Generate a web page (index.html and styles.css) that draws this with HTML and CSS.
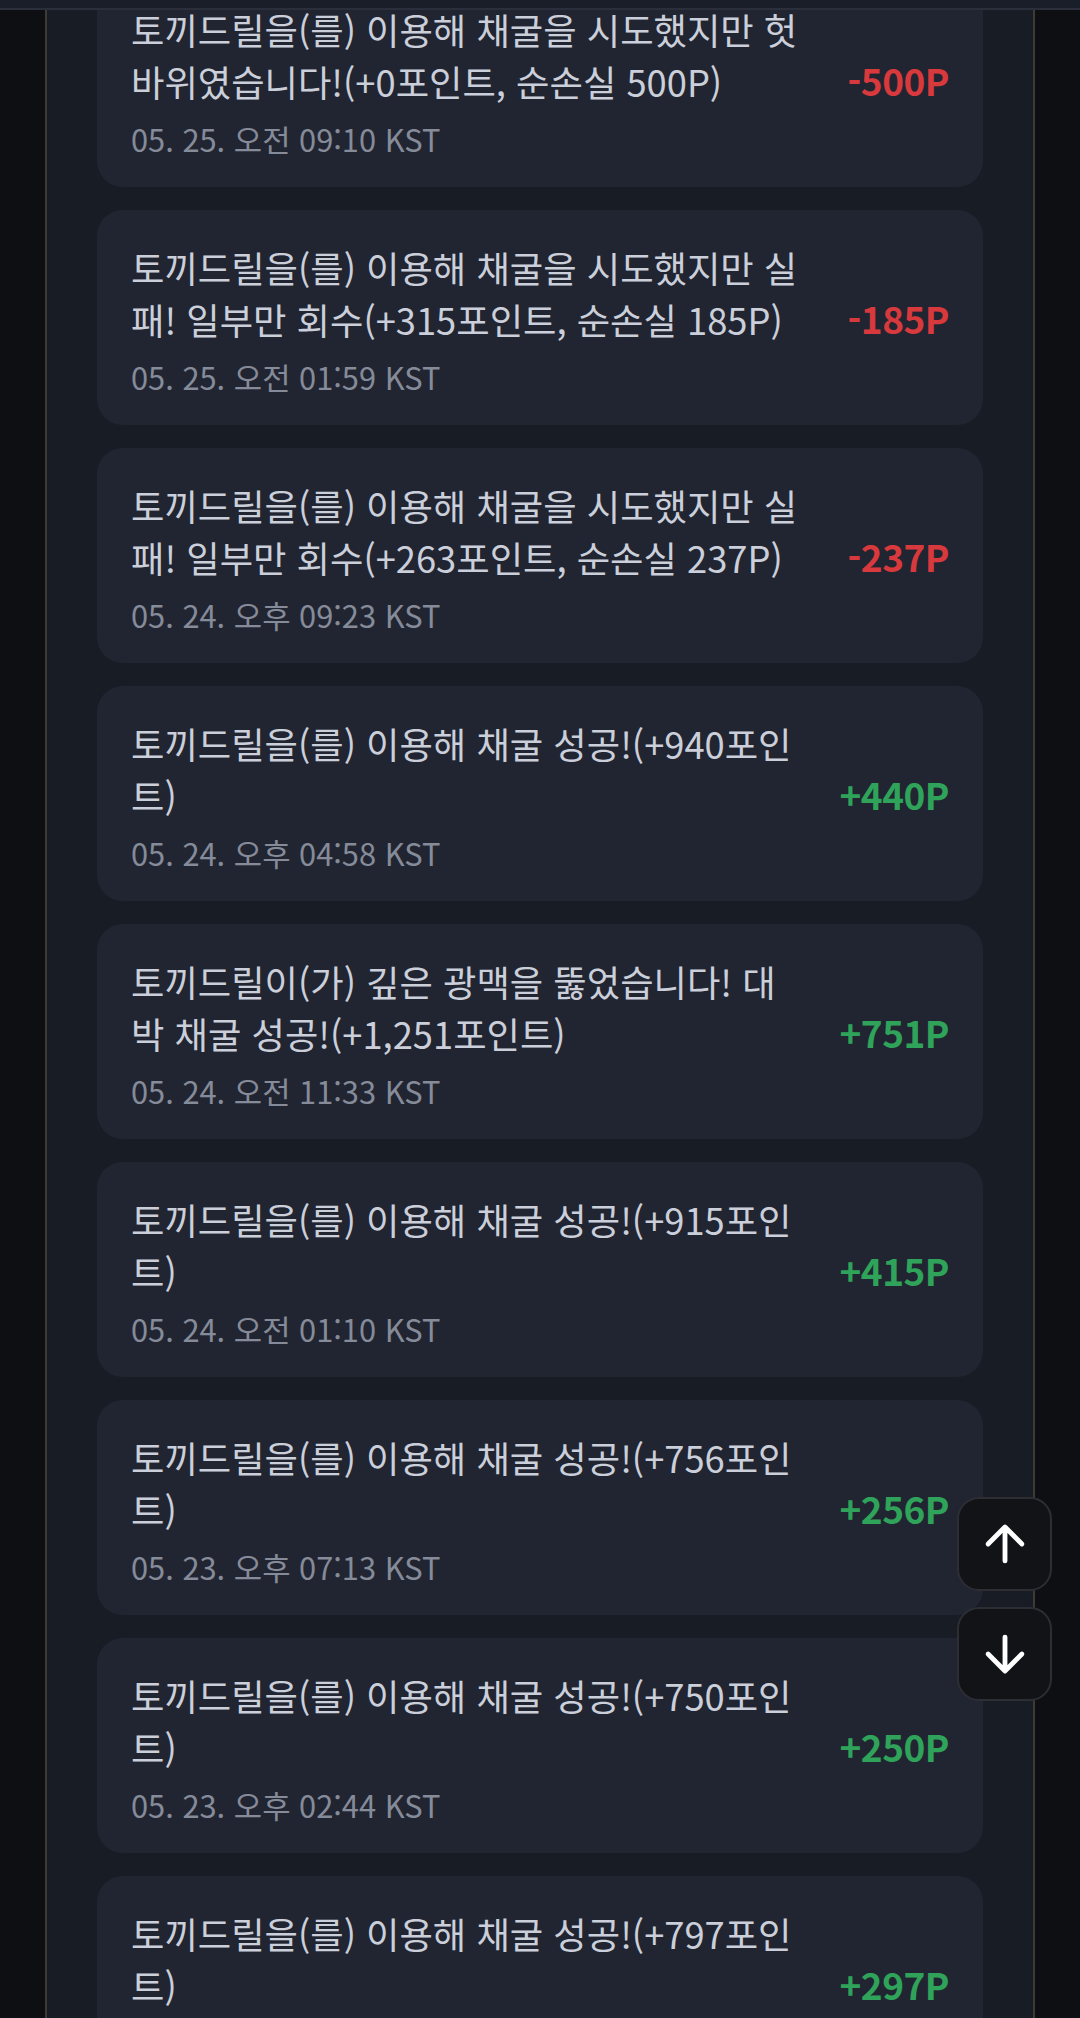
FILE: index.html
```html
<!DOCTYPE html>
<html lang="ko">
<head>
<meta charset="utf-8">
<title>채굴 기록</title>
<link rel="stylesheet" href="styles.css">
</head>
<body>
<div class="topbar"></div>
<main class="panel">
  <ul class="log">
    <li class="card">
      <div class="info">
        <p class="msg">토끼드릴을(를) 이용해 채굴을 시도했지만 헛바위였습니다!(+0포인트, 순손실 500P)</p>
        <p class="date">05. 25. 오전 09:10 KST</p>
      </div>
      <span class="amt loss">-500P</span>
    </li>
    <li class="card">
      <div class="info">
        <p class="msg">토끼드릴을(를) 이용해 채굴을 시도했지만 실패! 일부만 회수(+315포인트, 순손실 185P)</p>
        <p class="date">05. 25. 오전 01:59 KST</p>
      </div>
      <span class="amt loss">-185P</span>
    </li>
    <li class="card">
      <div class="info">
        <p class="msg">토끼드릴을(를) 이용해 채굴을 시도했지만 실패! 일부만 회수(+263포인트, 순손실 237P)</p>
        <p class="date">05. 24. 오후 09:23 KST</p>
      </div>
      <span class="amt loss">-237P</span>
    </li>
    <li class="card">
      <div class="info">
        <p class="msg">토끼드릴을(를) 이용해 채굴 성공!(+940포인트)</p>
        <p class="date">05. 24. 오후 04:58 KST</p>
      </div>
      <span class="amt gain">+440P</span>
    </li>
    <li class="card">
      <div class="info">
        <p class="msg">토끼드릴이(가) 깊은 광맥을 뚫었습니다! 대박 채굴 성공!(+1,251포인트)</p>
        <p class="date">05. 24. 오전 11:33 KST</p>
      </div>
      <span class="amt gain">+751P</span>
    </li>
    <li class="card">
      <div class="info">
        <p class="msg">토끼드릴을(를) 이용해 채굴 성공!(+915포인트)</p>
        <p class="date">05. 24. 오전 01:10 KST</p>
      </div>
      <span class="amt gain">+415P</span>
    </li>
    <li class="card">
      <div class="info">
        <p class="msg">토끼드릴을(를) 이용해 채굴 성공!(+756포인트)</p>
        <p class="date">05. 23. 오후 07:13 KST</p>
      </div>
      <span class="amt gain">+256P</span>
    </li>
    <li class="card">
      <div class="info">
        <p class="msg">토끼드릴을(를) 이용해 채굴 성공!(+750포인트)</p>
        <p class="date">05. 23. 오후 02:44 KST</p>
      </div>
      <span class="amt gain">+250P</span>
    </li>
    <li class="card">
      <div class="info">
        <p class="msg">토끼드릴을(를) 이용해 채굴 성공!(+797포인트)</p>
        <p class="date">05. 23. 오전 09:05 KST</p>
      </div>
      <span class="amt gain">+297P</span>
    </li>
  </ul>
</main>
<div class="scroll-btns">
  <button class="sbtn" aria-label="맨 위로">
    <svg viewBox="0 0 24 24" width="58" height="58"><path d="M12 19V5M5 12l7-7 7 7"/></svg>
  </button>
  <button class="sbtn" aria-label="맨 아래로">
    <svg viewBox="0 0 24 24" width="58" height="58"><path d="M12 5v14M5 12l7 7 7-7"/></svg>
  </button>
</div>
</body>
</html>
```

FILE: styles.css
```css
* { box-sizing: border-box; }
html, body {
  margin: 0;
  padding: 0;
  background: #0d0f13;
  height: 2018px;
  overflow: hidden;
  font-family: "Noto Sans CJK KR", "Noto Sans", sans-serif;
}
.topbar {
  position: fixed;
  top: 0;
  left: 0;
  right: 0;
  height: 10px;
  background: #1a1e29;
  border-bottom: 2px solid #2a2f3b;
  z-index: 5;
}
.panel {
  margin: 0 45px 0 45px;
  min-height: 2018px;
  background: #181c25;
  border-left: 2px solid #3f3a33;
  border-right: 2px solid #3f3a33;
  padding: 0 50px;
}
.log {
  list-style: none;
  margin: -28px 0 0 0;
  padding: 0;
  display: flex;
  flex-direction: column;
  gap: 23px;
}
.card {
  background: #212531;
  border-radius: 26px;
  height: 215px;
  padding: 2px 34px 0 34px;
  display: flex;
  align-items: center;
  justify-content: space-between;
  gap: 20px;
}
.info {
  width: 676px;
  flex: none;
}
.msg {
  margin: 0;
  font-size: 36.3px;
  line-height: 52px;
  color: #cbcfda;
}
.date {
  margin: 12px 0 0 0;
  font-size: 30.8px;
  line-height: 40px;
  color: #858b99;
}
.amt {
  font-size: 37px;
  font-weight: 700;
  white-space: nowrap;
  letter-spacing: -0.5px;
  margin-top: -2px;
}
.loss { color: #d8393d; }
.gain { color: #2fa35a; }
.scroll-btns {
  position: fixed;
  right: 28px;
  top: 1497px;
  display: flex;
  flex-direction: column;
  gap: 16px;
  z-index: 6;
}
.sbtn {
  width: 95px;
  height: 94px;
  border-radius: 22px;
  background: #121317;
  border: 2px solid #2c2e34;
  display: flex;
  align-items: center;
  justify-content: center;
  padding: 0;
}
.sbtn svg {
  fill: none;
  stroke: #ffffff;
  stroke-width: 2;
  stroke-linecap: round;
  stroke-linejoin: round;
}
```
